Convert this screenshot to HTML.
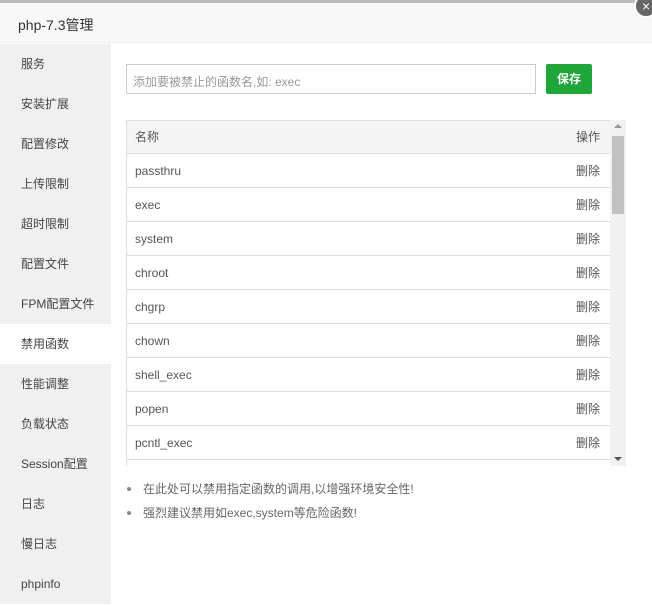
<!DOCTYPE html><html><head><meta charset="utf-8"><style>
*{margin:0;padding:0;box-sizing:border-box}
body{width:652px;height:603px;overflow:hidden;background:#fff;font-family:"Liberation Sans","Noto Sans CJK SC",sans-serif;font-size:12px;color:#555;position:relative}
.top{position:absolute;left:0;top:0;width:652px;height:4px;background:#bbb}
.title{position:absolute;left:0;top:3px;width:652px;height:40px;background:#f8f8f8;border-bottom:1px solid #eee;font-size:14px;color:#333;padding:12px 0 0 18px}
.close{position:absolute;left:634px;top:-6px;width:24px;height:24px;border-radius:50%;background:#666;border:2px solid #fff;color:#fff;font-size:14px;line-height:20px;text-indent:6px}
.side{position:absolute;left:0;top:44px;width:111px;height:560px;background:#f0f0f0}
.side div{height:40px;line-height:41px;padding-left:21px;color:#444}
.side .on{background:#fff}
.inp{position:absolute;left:126px;top:64px;width:410px;height:30px;border:1px solid #ccc;color:#999;padding:8px 6px;font-size:12px}
.btn{position:absolute;left:546px;top:64px;width:46px;height:30px;background:#20a53a;border-radius:2px;color:#fff;font-weight:bold;text-align:center;line-height:30px}
.tbl{position:absolute;left:126px;top:120px;width:485px;height:346px;border:1px solid #ddd;border-bottom:none;overflow:hidden}
.tbl div{height:34px;line-height:35px;border-bottom:1px solid #ddd;padding:0 10px 0 8px;display:flex;justify-content:space-between;color:#555}
.tbl .h{background:#f5f5f5;height:33px;line-height:33px}
.sb{position:absolute;left:610px;top:120px;width:16px;height:346px;background:#f1f1f1}
.th{position:absolute;left:612px;top:136px;width:12px;height:78px;background:#c1c1c1}
ul{position:absolute;left:143px;top:480px;list-style:none;color:#666}
li{height:24px;position:relative}
li:before{content:"";position:absolute;left:-16px;top:7px;width:4px;height:4px;border-radius:50%;background:#888}
</style></head><body>
<div class="top"></div>
<div class="title">php-7.3管理</div>
<div class="close">×</div>
<div class="side"><div>服务</div><div>安装扩展</div><div>配置修改</div><div>上传限制</div><div>超时限制</div><div>配置文件</div><div>FPM配置文件</div><div class="on">禁用函数</div><div>性能调整</div><div>负载状态</div><div>Session配置</div><div>日志</div><div>慢日志</div><div>phpinfo</div></div>
<div class="inp">添加要被禁止的函数名,如: exec</div>
<div class="btn">保存</div>
<div class="tbl">
<div class="h"><span>名称</span><span>操作</span></div>
<div><span>passthru</span><span>删除</span></div>
<div><span>exec</span><span>删除</span></div>
<div><span>system</span><span>删除</span></div>
<div><span>chroot</span><span>删除</span></div>
<div><span>chgrp</span><span>删除</span></div>
<div><span>chown</span><span>删除</span></div>
<div><span>shell_exec</span><span>删除</span></div>
<div><span>popen</span><span>删除</span></div>
<div><span>pcntl_exec</span><span>删除</span></div>
<div><span>ini_alter</span><span>删除</span></div>
</div>
<div class="sb"></div><div class="th"></div>
<div style="position:absolute;left:614px;top:124px;border:4px solid transparent;border-bottom:4px solid #999;border-top:none"></div>
<div style="position:absolute;left:614px;top:457px;border:4px solid transparent;border-top:4px solid #555;border-bottom:none"></div>
<ul><li>在此处可以禁用指定函数的调用,以增强环境安全性!</li><li>强烈建议禁用如exec,system等危险函数!</li></ul>
</body></html>
